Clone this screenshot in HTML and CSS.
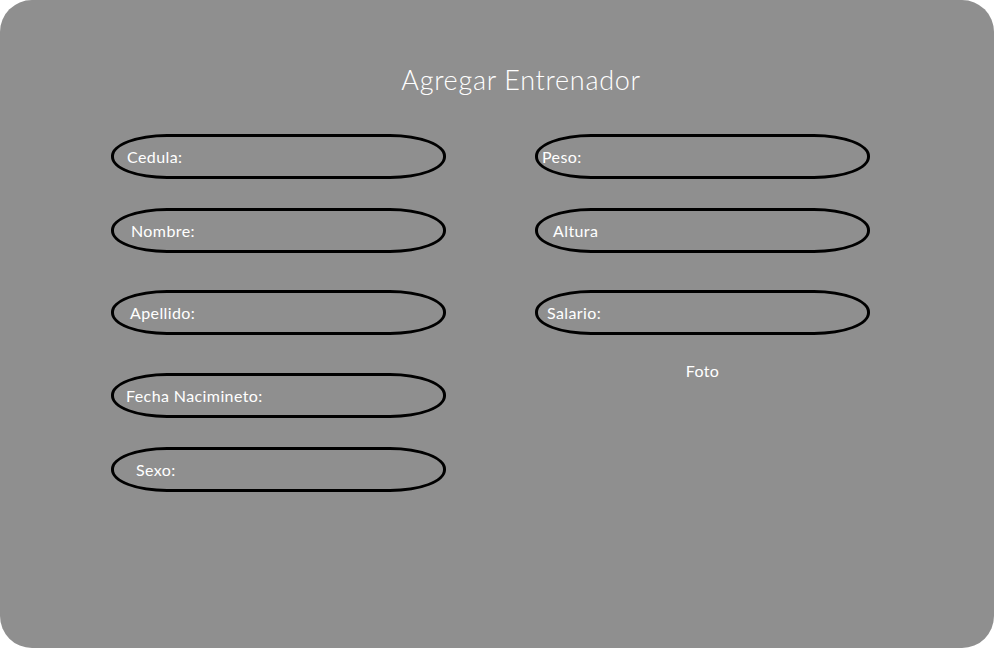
FILE: index.html
```html
<!DOCTYPE html>
<html lang="es">
<head>
<meta charset="utf-8">
<title>Agregar Entrenador</title>
<link rel="stylesheet" href="styles.css">
</head>
<body>
<main class="panel">
  <h1 class="title">Agregar Entrenador</h1>
  <div class="form">
    <div class="col">
      <div class="field f-cedula">Cedula:</div>
      <div class="field f-nombre">Nombre:</div>
      <div class="field f-apellido">Apellido:</div>
      <div class="field f-fecha">Fecha Nacimineto:</div>
      <div class="field f-sexo">Sexo:</div>
    </div>
    <div class="col">
      <div class="field f-peso">Peso:</div>
      <div class="field f-altura">Altura</div>
      <div class="field f-salario">Salario:</div>
      <div class="foto">Foto</div>
    </div>
  </div>
</main>
</body>
</html>
```
FILE: styles.css
```css
html, body {
  margin: 0;
  padding: 0;
  background: #ffffff;
}
.panel {
  width: 994px;
  height: 648px;
  box-sizing: border-box;
  background: #8f8f8f;
  border-radius: 32px;
  padding-top: 63px;
  font-family: "Lato", "Open Sans", sans-serif;
  color: #ffffff;
  overflow: hidden;
}
.title {
  margin: 0;
  text-align: center;
  font-weight: 300;
  font-size: 27px;
  line-height: 34px;
  letter-spacing: 0.7px;
  padding-left: 48px;
}
.form {
  display: flex;
  gap: 89px;
  padding-left: 111px;
  margin-top: 37px;
}
.col {
  display: flex;
  flex-direction: column;
  width: 335px;
}
.field {
  box-sizing: border-box;
  height: 45px;
  border: 3px solid #000;
  border-radius: 56px / 22px;
  display: flex;
  align-items: center;
  font-size: 16px;
  font-weight: 400;
  letter-spacing: 0.4px;
}
.field + .field { margin-top: 29px; }
.f-apellido, .f-salario { margin-top: 37px !important; }
.f-fecha { margin-top: 38px !important; }
.f-cedula { padding-left: 13px; }
.f-nombre { padding-left: 17px; }
.f-apellido { padding-left: 16px; }
.f-fecha { padding-left: 12px; }
.f-sexo { padding-left: 22px; }
.f-peso { padding-left: 4px; }
.f-altura { padding-left: 15px; }
.f-salario { padding-left: 9px; }
.foto {
  margin-top: 26px;
  text-align: center;
  font-size: 16px;
  line-height: 20px;
  letter-spacing: 0.4px;
}
```
